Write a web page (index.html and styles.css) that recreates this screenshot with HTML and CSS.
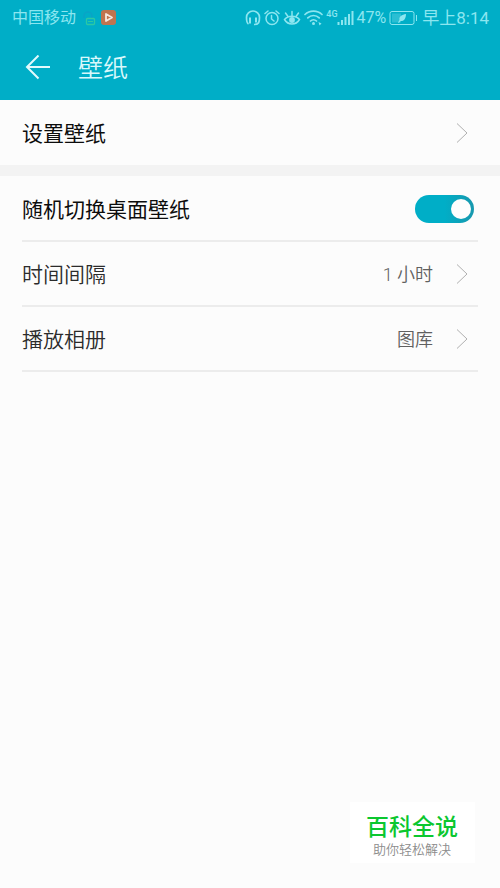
FILE: index.html
```html
<!DOCTYPE html>
<html lang="zh-CN">
<head>
<meta charset="utf-8">
<meta name="viewport" content="width=device-width, initial-scale=1">
<title>壁纸</title>
<link rel="stylesheet" href="styles.css">
</head>
<body>
<header class="top">
  <div class="status">
    <span>中国移动</span>
    <svg class="carrier-icons" width="36" height="18" viewBox="0 0 36 18" aria-hidden="true">
      <path d="M3 9V7a4 4 0 0 1 8 0v2" fill="none" stroke="#0aa3c6" stroke-width="1.5"/>
      <rect x="5.500" y="9.500" width="8" height="6" rx="1" fill="none" stroke="#2cc8a4" stroke-width="1.300"/>
      <path d="M7 12.500h5" stroke="#2cc8a4"/>
      <rect x="20" y="1" width="15" height="15" rx="3" fill="#c0744f"/>
      <path d="M25 5l6 3.500-6 3.500z" fill="none" stroke="#f6e8df" stroke-width="1.800" stroke-linejoin="round"/>
    </svg>
    <div class="indicators">
      <svg width="16" height="18" viewBox="0 0 16 18" aria-hidden="true">
        <path d="M3.500 15C1.500 14 1.500 11 1.500 8.500a6.500 6.500 0 0 1 13 0c0 4.500-.5 7-5.500 7" fill="none" stroke="currentColor" stroke-width="1.700"/>
        <path d="M5 8.500v6M11 8.500v5" stroke="currentColor" stroke-width="2"/>
      </svg>
      <svg width="16" height="18" viewBox="0 0 16 18" aria-hidden="true">
        <g fill="none" stroke="currentColor" stroke-width="1.500" stroke-linecap="round">
          <circle cx="8" cy="9.500" r="6"/>
          <path d="M1 4.500L4 2M15 4.500L12 2M7.500 6.500v3.500l2.500 2"/>
        </g>
      </svg>
      <svg width="18" height="18" viewBox="0 0 18 18" aria-hidden="true">
        <g fill="none" stroke="currentColor" stroke-width="1.500" stroke-linecap="round">
          <path d="M1.500 10.500C5 6 13 6 16.500 10.500 13 16.500 5 16.500 1.500 10.500z"/>
          <path d="M9 2.500v4M2.500 4l2.500 3.500M15.500 4L13 7.500"/>
        </g>
        <circle cx="9" cy="11" r="2.900" fill="currentColor"/>
      </svg>
      <svg width="19" height="18" viewBox="0 0 19 18" aria-hidden="true">
        <g fill="none" stroke="currentColor" stroke-width="1.700" stroke-linecap="round">
          <path d="M1 5.500c4.500-4.500 12.500-4.500 17 0M3.800 8.900c3.200-3.200 8.200-3.200 11.400 0M6.500 12c1.700-1.700 4.300-1.700 6 0"/>
        </g>
        <circle cx="9.500" cy="14.500" r="1.500" fill="currentColor"/>
        <path d="M14.500 13l3 1.500-2 2z" fill="currentColor"/>
      </svg>
      <span class="network">4G</span>
      <svg class="signal" width="17" height="18" viewBox="0 0 17 18" aria-hidden="true">
        <path d="M1.500 13v3M5 11v5M8.500 8v8M12 5v11M15.500 2v14" stroke="currentColor" stroke-width="2"/>
      </svg>
      <span>47%</span>
      <svg class="battery" width="28" height="18" viewBox="0 0 28 18" aria-hidden="true">
        <rect x="1" y="2.500" width="24" height="13" rx="2" fill="none" stroke="currentColor"/>
        <path d="M3 4.500h9v9H3z" fill="currentColor" opacity=".3"/>
        <path d="M9 13.500L10.500 11C9.500 7.500 13 5.500 17 5c0 4.500-2 7.500-5.500 7L10 14z" fill="currentColor"/>
        <path d="M27.500 6v6" stroke="currentColor"/>
      </svg>
      <span class="time">早上8:14</span>
    </div>
  </div>
  <div class="bar">
    <button class="back" type="button" aria-label="返回">
      <svg width="26" height="26" viewBox="0 0 26 26" aria-hidden="true">
        <path d="M25 12H2M13.500 .5L2 12l11.500 11.500" fill="none" stroke="currentColor" stroke-width="2"/>
      </svg>
    </button>
    <h1>壁纸</h1>
  </div>
</header>
<main>
  <section class="group">
    <a class="row strong" href="#set">
      <span>设置壁纸</span>
      <svg class="chevron" width="12" height="20" viewBox="0 0 12 20" aria-hidden="true"><path d="M1 .5L11 10 1 19.500"/></svg>
    </a>
  </section>
  <section class="group divided">
    <div class="row strong">
      <label for="shuffle">随机切换桌面壁纸</label>
      <input class="switch" id="shuffle" type="checkbox" role="switch" checked>
    </div>
    <a class="row" href="#interval">
      <span>时间间隔</span>
      <span class="value">1 小时</span>
      <svg class="chevron" width="12" height="20" viewBox="0 0 12 20" aria-hidden="true"><path d="M1 .5L11 10 1 19.500"/></svg>
    </a>
    <a class="row" href="#album">
      <span>播放相册</span>
      <span class="value">图库</span>
      <svg class="chevron" width="12" height="20" viewBox="0 0 12 20" aria-hidden="true"><path d="M1 .5L11 10 1 19.500"/></svg>
    </a>
  </section>
</main>
<aside class="badge">
  <strong>百科全说</strong>
  <span>助你轻松解决</span>
</aside>
</body>
</html>
```
FILE: styles.css
```css
* {
  box-sizing: border-box;
}

body {
  margin: 0;
  min-height: 100vh;
  background: #fcfcfc;
  color: #2b2b2b;
  font-family: Roboto, "Noto Sans CJK SC", sans-serif;
}

.top {
  background: #00aec7;
}

.status {
  display: flex;
  align-items: center;
  height: 35px;
  padding: 0 11px 0 12px;
  color: #8ce6f0;
  font-size: 16px;
  line-height: 20px;
  white-space: nowrap;
}

.status svg {
  display: block;
  flex: none;
}

.carrier-icons {
  margin-left: 5px;
}

.indicators {
  display: flex;
  align-items: center;
  gap: 3px;
  margin-left: auto;
}

.network {
  align-self: flex-start;
  font-size: 9px;
  font-weight: 500;
  line-height: 12px;
}

.signal {
  margin-left: -4px;
}

.battery {
  margin-right: 2px;
}

.time {
  font-size: 17px;
}

.bar {
  display: flex;
  align-items: center;
  gap: 27px;
  height: 65px;
  padding: 0 25px;
  color: #d9f8fb;
}

.back {
  padding: 0;
  border: 0;
  background: none;
  color: #e2fafc;
}

.back svg {
  display: block;
}

h1 {
  margin: 0;
  padding-top: 2px;
  font-size: 25px;
  font-weight: 350;
  line-height: 32px;
}

.group {
  padding: 0 22px;
}

.divided {
  padding-top: 1px;
  border-top: 11px solid #f3f3f3;
}

.row {
  display: flex;
  align-items: center;
  height: 65px;
  color: inherit;
  font-size: 21px;
  font-weight: 350;
  line-height: 28px;
  text-decoration: none;
}

.row > span,
.row > label {
  padding-top: 2px;
}

.divided .row {
  border-bottom: 2px solid #ececec;
}

.row.strong {
  color: #0c0c0c;
  font-weight: 400;
}

.value {
  margin-left: auto;
  color: #606060;
  font-size: 18px;
}

.chevron {
  flex: none;
  margin: 0 10px 0 auto;
  fill: none;
  stroke: #b0b0b0;
  stroke-width: 1;
}

.value + .chevron {
  margin-left: 23px;
}

.switch {
  appearance: none;
  display: flex;
  align-items: center;
  width: 59px;
  height: 28px;
  margin: 0 4px 0 auto;
  padding: 0 3px;
  border-radius: 14px;
  background: #b8b8b8;
}

.switch::before {
  content: "";
  width: 20px;
  height: 20px;
  border-radius: 50%;
  background: #fdfdfd;
}

.switch:checked {
  justify-content: flex-end;
  background: linear-gradient(90deg, #00aec7 50%, #1898ae);
}

.badge {
  position: fixed;
  right: 25px;
  bottom: 25px;
  display: flex;
  flex-direction: column;
  align-items: center;
  padding: 10px 17px 5px 16px;
  background: #fff;
  color: #8c8c8c;
  font-size: 13px;
  font-weight: 350;
  line-height: 16px;
}

.badge strong {
  padding-top: 2px;
  color: #0bc72f;
  font-size: 23px;
  font-weight: 500;
  line-height: 28px;
}
```
